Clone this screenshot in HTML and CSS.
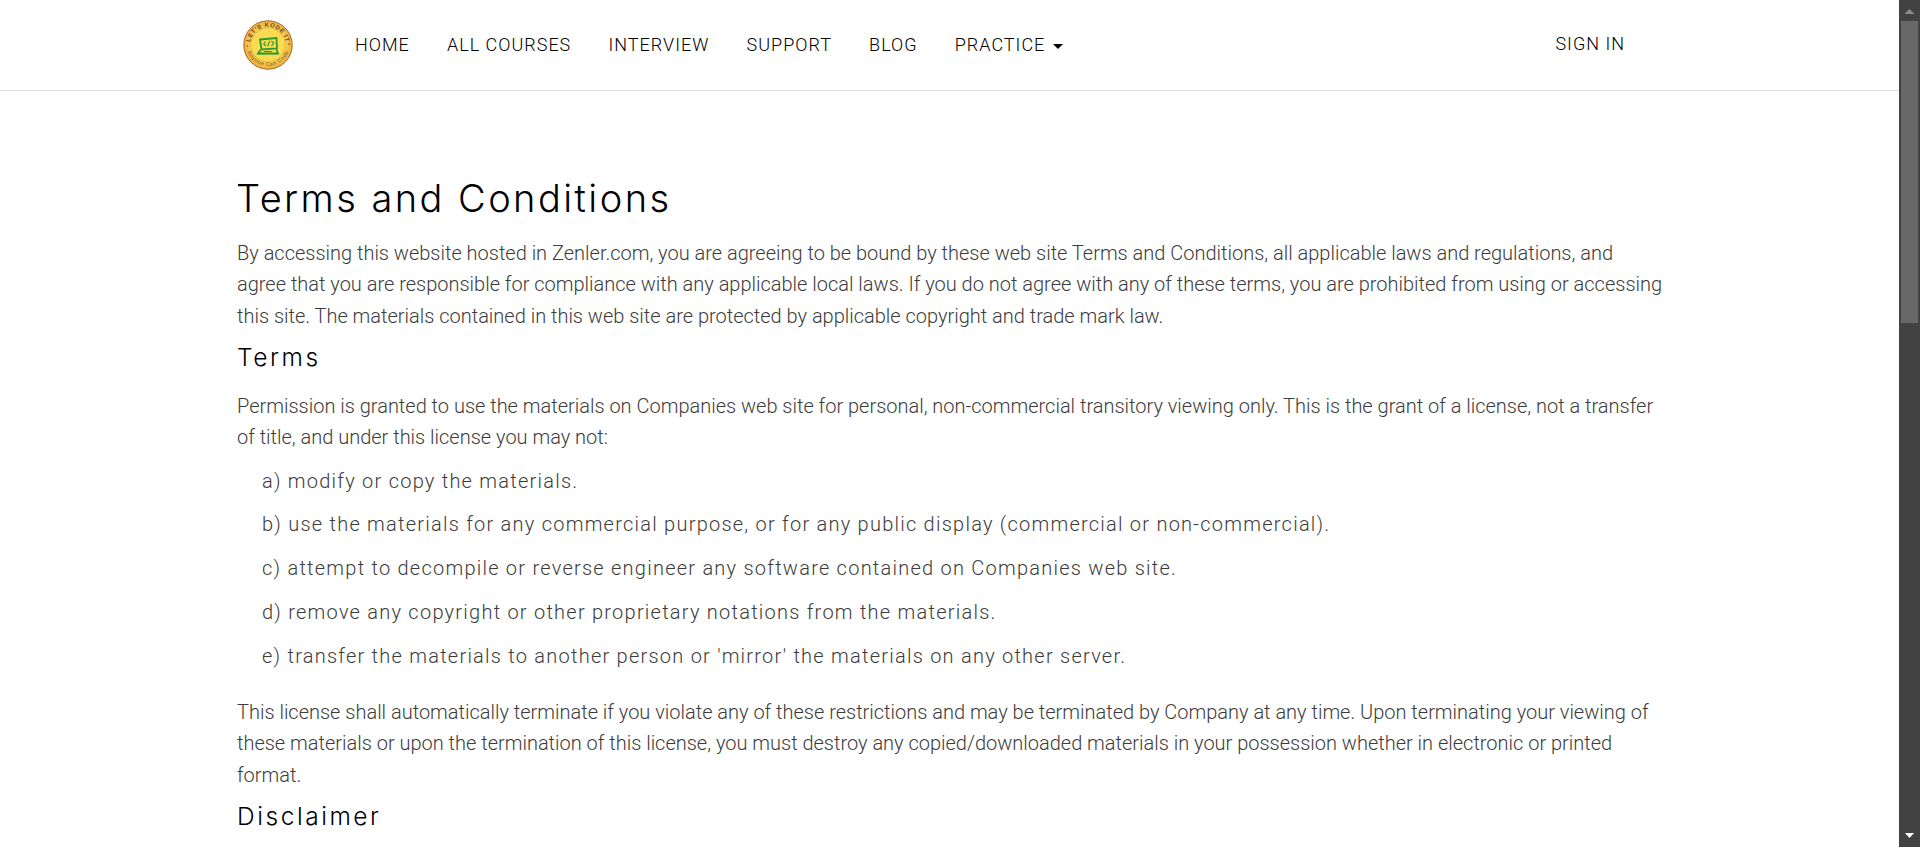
FILE: index.html
```
<!DOCTYPE html>
<html lang="en">
<head>
<meta charset="utf-8">
<title>Terms and Conditions</title>
<link rel="stylesheet" href="styles.css">
</head>
<body>
<div class="page">
  <header class="header">
    <a class="logo"><svg width="52" height="52" viewBox="0 0 52 52">
      <defs>
        <path id="arc-top" d="M8 26a18 18 0 0 1 36 0"/>
        <path id="arc-bottom" d="M4 25a22 22 0 0 0 44 0"/>
        <radialGradient id="gold"><stop offset="0" stop-color="#fbdf58"/><stop offset=".7" stop-color="#f8d355"/><stop offset="1" stop-color="#eaae3e"/></radialGradient>
      </defs>
      <circle cx="26" cy="26" r="24.200" fill="url(#gold)" stroke="#a8682c" stroke-width="1"/>
      <circle cx="26" cy="26" r="17" fill="#fadb52" stroke="#b98f35" stroke-width=".6" stroke-dasharray="1.500 .7"/>
      <text class="seal-top"><textPath href="#arc-top" startOffset="50%" text-anchor="middle">LET'S KODE IT</textPath></text>
      <text class="seal-bottom"><textPath href="#arc-bottom" startOffset="50%" text-anchor="middle">Anyone Can Code</textPath></text>
      <circle cx="5.500" cy="27" r=".7" fill="#8a4d20"/><circle cx="47" cy="25" r=".8" fill="#6a3c1a"/>
      <path d="M18 20.500l16.500-1.500.5 10.500-15.500 1zM18.500 31l-2.500 3.500h20l-1.500-4" fill="none" stroke="#2f9a2e" stroke-width="1.800"/>
      <path d="M16 34.700h20.500M22 32.500h8M24 22.500l-2.300 2.500 2.300 2M29.500 22l2.300 2.300-2.300 2.500M27.700 21.800l-2 5.500" fill="none" stroke="#2f9a2e" stroke-width="1.100"/>
    </svg></a>
    <nav class="nav">
      <a>HOME</a><a>ALL COURSES</a><a>INTERVIEW</a><a>SUPPORT</a><a>BLOG</a><a>PRACTICE<i class="caret"></i></a>
    </nav>
    <a class="signin">SIGN IN</a>
  </header>
  <main class="content">
    <h1>Terms and Conditions</h1>
    <p>By accessing this website hosted in Zenler.com, you are agreeing to be bound by these web site Terms and Conditions, all applicable laws and regulations, and<br>agree that you are responsible for compliance with any applicable local laws. If you do not agree with any of these terms, you are prohibited from using or accessing<br>this site. The materials contained in this web site are protected by applicable copyright and trade mark law.</p>
    <h2>Terms</h2>
    <p>Permission is granted to use the materials on Companies web site for personal, non-commercial transitory viewing only. This is the grant of a license, not a transfer<br>of title, and under this license you may not:</p>
    <ul class="terms-list">
      <li>a) modify or copy the materials.</li>
      <li>b) use the materials for any commercial purpose, or for any public display (commercial or non-commercial).</li>
      <li>c) attempt to decompile or reverse engineer any software contained on Companies web site.</li>
      <li>d) remove any copyright or other proprietary notations from the materials.</li>
      <li>e) transfer the materials to another person or 'mirror' the materials on any other server.</li>
    </ul>
    <p>This license shall automatically terminate if you violate any of these restrictions and may be terminated by Company at any time. Upon terminating your viewing of<br>these materials or upon the termination of this license, you must destroy any copied/downloaded materials in your possession whether in electronic or printed<br>format.</p>
    <h2>Disclaimer</h2>
  </main>
</div>
<div class="scrollbar">
  <svg class="arrow-up" width="21" height="21"><path d="M5.500 14h10l-5-5z" fill="#8a8a8a"/></svg>
  <div class="thumb"></div>
  <svg class="arrow-down" width="21" height="21"><path d="M6 7h9l-4.500 5z" fill="#fff"/></svg>
</div>
</body>
</html>
```
FILE: styles.css
```
* { box-sizing: border-box; }
body {
  margin: 0;
  height: 847px;
  overflow: hidden;
  display: flex;
  background: #fff;
  font-family: Roboto, "Liberation Sans", sans-serif;
  font-weight: 300;
}
.page { flex: 1; min-width: 0; }
.header {
  height: 91px;
  border-bottom: 1px solid #e0e0e0;
  display: flex;
  align-items: center;
  padding: 0 274px 0 242px;
  color: #000;
}
.logo { display: flex; width: 52px; height: 52px; }
.seal-top { font: 700 6px "Liberation Sans", sans-serif; fill: #6d421b; letter-spacing: .6px; }
.seal-bottom { font: 700 5.500px "Liberation Sans", sans-serif; fill: #a9702c; letter-spacing: .4px; }
.nav {
  display: flex;
  gap: 37.200px;
  margin: -2px 0 0 61px;
  flex: 1;
  font-size: 18px;
  letter-spacing: 1px;
  white-space: nowrap;
}
.nav a { display: flex; align-items: center; }
.caret {
  margin: 4px 0 0 8px;
  border: 5px solid transparent;
  border-top-color: #000;
  border-bottom: 0;
}
.signin { font-size: 18px; letter-spacing: 1px; margin-top: -4px; }
.content { padding: 79px 0 0 237px; white-space: nowrap; color: #3c3c3c; }
h1, h2 {
  margin: 0;
  font-family: Inter, sans-serif;
  font-weight: 300;
  color: #000;
}
h1 { font-size: 38px; line-height: 56px; height: 67.800px; letter-spacing: 2.450px; text-indent: -1px; }
h2 { font-size: 24.500px; line-height: 50px; height: 58.600px; letter-spacing: 2.550px; }
p { margin: 0; font-size: 20px; line-height: 31.420px; letter-spacing: -.008px; }
.terms-list {
  list-style: none;
  margin: 12.200px 0 24.900px;
  padding: 0 0 0 25px;
  display: grid;
  gap: 12.350px;
  font-size: 20px;
  line-height: 31.400px;
  letter-spacing: 1.240px;
}
.scrollbar {
  width: 21px;
  background: #424242;
  display: flex;
  flex-direction: column;
}
.scrollbar svg { display: block; }
.thumb { height: 302px; margin: 0 2px; background: #686868; }
.arrow-down { margin-top: auto; }
```
